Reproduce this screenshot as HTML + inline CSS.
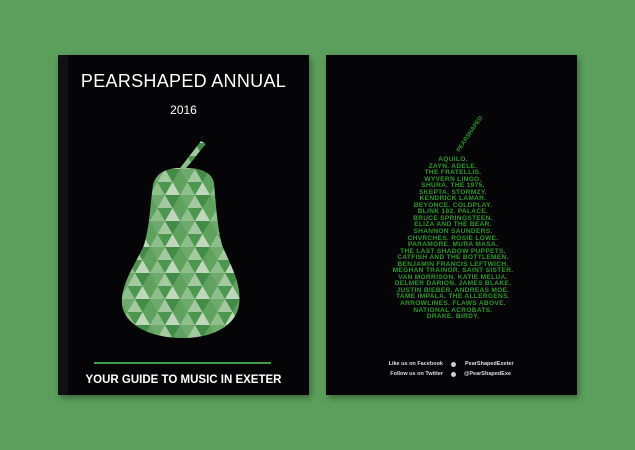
<!DOCTYPE html>
<html><head><style>
html,body{margin:0;padding:0;}
body{width:635px;height:450px;background:#5c9f5c;position:relative;overflow:hidden;font-family:"Liberation Sans",sans-serif;}
.cov{position:absolute;background:#050507;box-shadow:2px 3px 6px rgba(0,0,0,.35);}
.t{position:absolute;color:#fff;text-align:center;white-space:nowrap;}
.songs{position:absolute;left:353px;width:200px;top:157px;text-align:center;color:#2f9a2a;font-size:6.6px;line-height:6.55px;font-weight:bold;letter-spacing:.3px;}
.ft{position:absolute;color:#ddd;font-size:5.5px;font-weight:bold;white-space:nowrap;}
</style></head><body>
<div class="cov" style="left:58px;top:55px;width:251px;height:340px;"></div>
<div style="position:absolute;left:58px;top:55px;width:10px;height:340px;background:#101114;"></div>
<div class="t" style="left:58px;width:251px;top:71px;font-size:18px;letter-spacing:.3px;">PEARSHAPED ANNUAL</div>
<div class="t" style="left:58px;width:251px;top:103px;font-size:12px;">2016</div>
<div style="position:absolute;left:94px;top:362px;width:177px;height:2px;background:#3f9d47;"></div>
<div class="t" style="left:58px;width:251px;top:374px;font-size:11.5px;font-weight:bold;">YOUR GUIDE TO MUSIC IN EXETER</div>
<svg style="position:absolute;left:0;top:0" width="635" height="450">
<defs>
<pattern id="p" width="30" height="26" patternUnits="userSpaceOnUse">
<rect width="30" height="26" fill="#5ea25e"/>
<polygon points="0,13 7.5,0 15,13" fill="#8cbf8a"/>
<polygon points="7.5,0 22.5,0 15,13" fill="#4c9650"/>
<polygon points="15,13 22.5,0 30,13" fill="#bfd8bb"/>
<polygon points="0,13 15,13 7.5,26" fill="#6daa6b"/>
<polygon points="7.5,26 15,13 22.5,26" fill="#a4c9a0"/>
<polygon points="15,13 30,13 22.5,26" fill="#438c48"/>
</pattern>
</defs>
<path d="M201,141 L206,144 C200,150 194,160 186,168 C200,168 212,172 214,183 C216,205 217,225 222,245 C232,268 242,285 239,305 C236,325 214,338 183,338 C150,338 125,325 122,305 C120,285 135,265 144,245 C150,225 150,205 153,185 C156,172 168,168 180,168 C188,158 194,150 201,141 Z" fill="url(#p)"/>
</svg>

<div class="cov" style="left:326px;top:55px;width:251px;height:340px;"></div>
<div style="position:absolute;left:456px;top:150px;color:#2f9a2a;font-size:6px;font-weight:bold;transform:rotate(-56deg);transform-origin:left top;white-space:nowrap;">PEARSHAPED</div>
<div class="songs">AQUILO.<br>ZAYN. ADELE.<br>THE FRATELLIS.<br>WYVERN LINGO.<br>SHURA. THE 1975.<br>SKEPTA. STORMZY.<br>KENDRICK LAMAR.<br>BEYONCE. COLDPLAY.<br>BLINK 182. PALACE.<br>BRUCE SPRINGSTEEN.<br>ELIZA AND THE BEAR.<br>SHANNON SAUNDERS.<br>CHVRCHES. ROSIE LOWE.<br>PARAMORE. MURA MASA.<br>THE LAST SHADOW PUPPETS.<br>CATFISH AND THE BOTTLEMEN.<br>BENJAMIN FRANCIS LEFTWICH.<br>MEGHAN TRAINOR. SAINT SISTER.<br>VAN MORRISON. KATIE MELUA.<br>DELMER DARION. JAMES BLAKE.<br>JUSTIN BIEBER. ANDREAS MOE.<br>TAME IMPALA. THE ALLERGENS.<br>ARROWLINES. FLAWS ABOVE.<br>NATIONAL ACROBATS.<br>DRAKE. BIRDY.</div>
<div class="ft" style="right:192px;top:361px;">Like us on Facebook</div>
<div class="ft" style="right:192px;top:371px;">Follow us on Twitter</div>
<div style="position:absolute;left:451px;top:362px;width:5px;height:5px;border-radius:50%;background:#ccc;"></div>
<div style="position:absolute;left:451px;top:372px;width:5px;height:5px;border-radius:50%;background:#ccc;"></div>
<div class="ft" style="left:465px;top:361px;">PearShapedExeter</div>
<div class="ft" style="left:464px;top:371px;">@PearShapedExe</div>
</body></html>
